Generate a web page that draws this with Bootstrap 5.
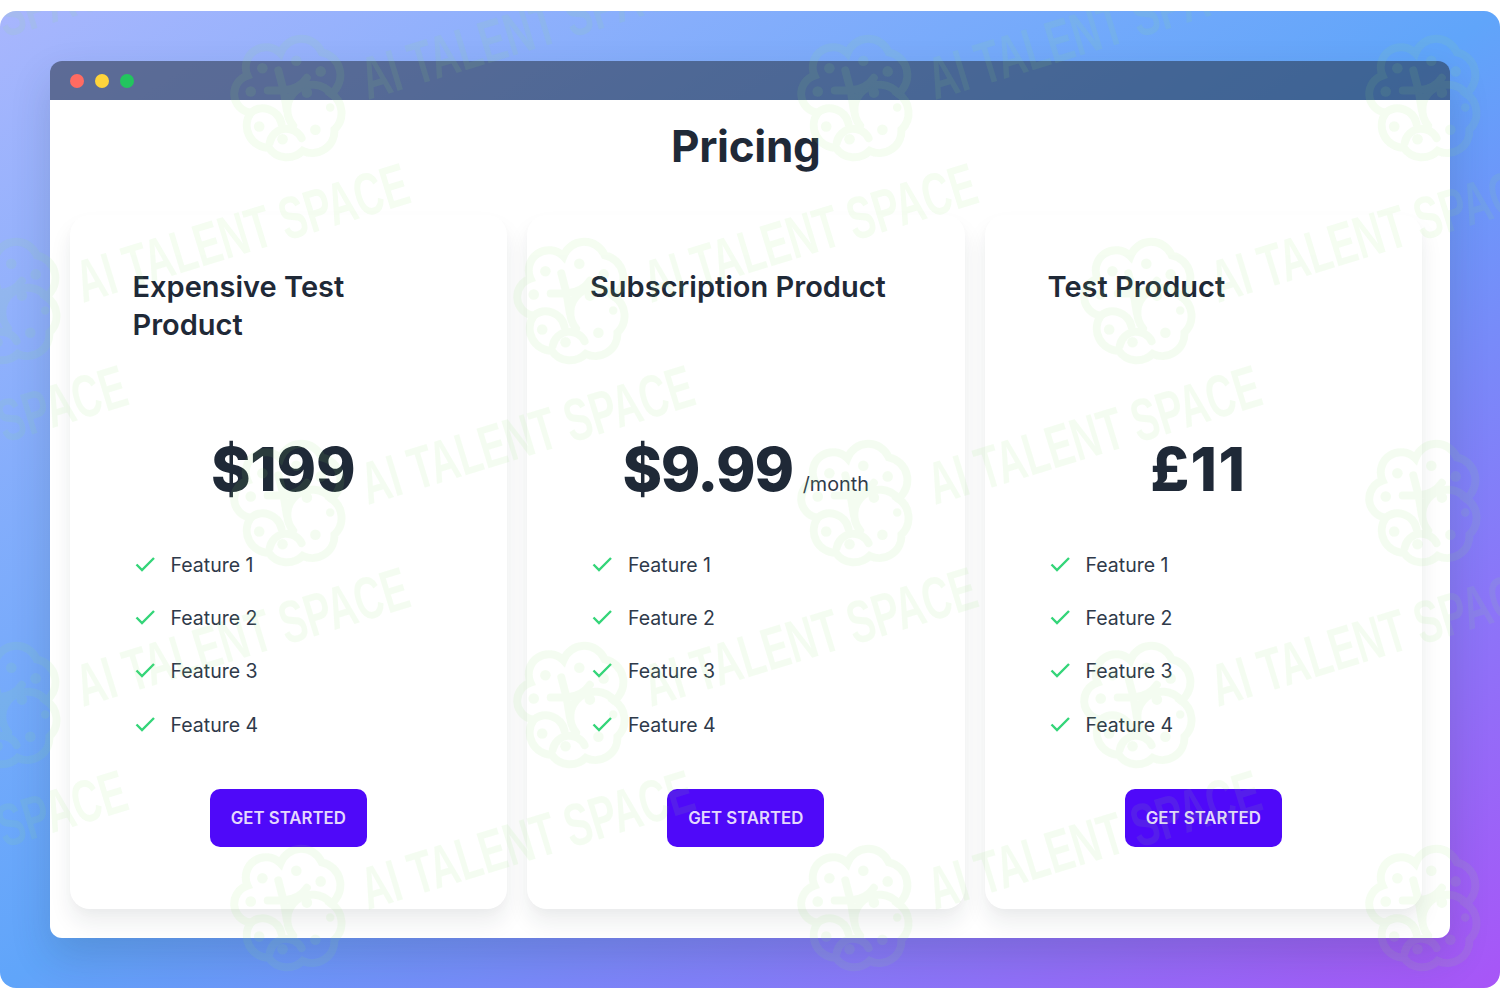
<!doctype html>
<html lang="en">
<head>
<meta charset="utf-8">
<title>Pricing</title>
<link href="https://cdn.jsdelivr.net/npm/bootstrap@5.3.0/dist/css/bootstrap.min.css" rel="stylesheet">
<style>
html, body { background: #fff; }
body { font-family: "Inter", "Liberation Sans", sans-serif; color: #1f2937; height: 1000px; overflow: hidden; padding: 11px 0 12px; }
.stage { height: 977px; padding: 50px; border-radius: 16px; background: linear-gradient(to bottom right, #a8b6fd 0%, #60a5fa 50%, #a855f7 100%); overflow: hidden; }
.app-window { height: 877px; border-radius: 12px; box-shadow: 0 18px 40px rgba(31,41,55,.16); overflow: hidden; }
.title-bar { height: 39px; padding-left: 20px; gap: 11px; background: rgba(31,41,55,.52); }
.dot-light { width: 14px; height: 14px; border-radius: 50%; }
.dot-red { background: #ff6b62; } .dot-yellow { background: #ffd43b; } .dot-green { background: #22c55e; }
.sheet { height: 838px; background: #fff; }
.page-heading { font-size: 44px; font-weight: 700; line-height: 53px; letter-spacing: -.3px; margin: 0; padding: 20px 28px 0 19.5px; height: 115px; color: #1f2937; }
.plans { padding: 0 28px 0 19.5px; gap: 20px; }
.plan { flex: 1 1 0; height: 694px; border: 0; border-radius: 20px; padding: 52.5px 40px 0 63px; box-shadow: 0 14px 22px rgba(31,41,55,.08), 0 4px 10px rgba(31,41,55,.02); }
.plan-name { font-size: 29px; font-weight: 600; line-height: 38px; height: 169.5px; max-width: 320px; margin: 0; color: #1f2937; }
.price-line { height: 64px; gap: 10px; margin: 0 -40px 0 -63px; }
.price-val { font-size: 60px; font-weight: 800; line-height: 64px; letter-spacing: -.2px; color: #1f2937; }
.price-tight { letter-spacing: -1.4px; }
.price-loose { letter-spacing: 1.3px; }
.price-per { font-size: 19.8px; line-height: 24px; margin-top: 35px; color: #2f3a4a; }
.feat-list { margin: 38px 0 0; }
.feat-item { height: 53.2px; gap: 16px; font-size: 19.5px; color: #2f3a4a; background: transparent; border: 0; padding: 0; }
.feat-item svg { width: 22px; height: 22px; flex: none; margin: -3px 0 0 1px; margin-right: -1px; }
.btn-row { margin: 37.4px -40px 0 -63px; }
.btn-cta { width: 157px; height: 58px; border-radius: 10px; background: #4f09f9; border: 0; color: #e4d8fd; font-size: 16.8px; font-weight: 600; line-height: 58px; padding: 0; }
.wm-layer { inset: 0; pointer-events: none; }
.wm-layer .wm-text { font-family: "Liberation Sans Narrow", "Liberation Sans", sans-serif; font-weight: 700; font-size: 60px; fill: #90e870; }
</style>
</head>
<body>
<div class="stage position-relative">
  <div class="app-window">
    <div class="title-bar d-flex align-items-center">
      <span class="dot-light dot-red"></span><span class="dot-light dot-yellow"></span><span class="dot-light dot-green"></span>
    </div>
    <div class="sheet">
      <h1 class="page-heading text-center">Pricing</h1>
      <div class="plans d-flex">
        <div class="card plan">
          <h2 class="plan-name">Expensive Test Product</h2>
          <div class="price-line d-flex justify-content-center"><span class="price-val">$199</span><span class="price-per"></span></div>
          <ul class="feat-list list-group">
            <li class="list-group-item feat-item d-flex align-items-center"><svg viewBox="0 0 22 22" fill="none" stroke="#34d579" stroke-width="2.4"><path d="M2.5 11.5l5.5 5.5L20 5"/></svg>Feature 1</li>
            <li class="list-group-item feat-item d-flex align-items-center"><svg viewBox="0 0 22 22" fill="none" stroke="#34d579" stroke-width="2.4"><path d="M2.5 11.5l5.5 5.5L20 5"/></svg>Feature 2</li>
            <li class="list-group-item feat-item d-flex align-items-center"><svg viewBox="0 0 22 22" fill="none" stroke="#34d579" stroke-width="2.4"><path d="M2.5 11.5l5.5 5.5L20 5"/></svg>Feature 3</li>
            <li class="list-group-item feat-item d-flex align-items-center"><svg viewBox="0 0 22 22" fill="none" stroke="#34d579" stroke-width="2.4"><path d="M2.5 11.5l5.5 5.5L20 5"/></svg>Feature 4</li>
          </ul>
          <div class="btn-row d-flex justify-content-center"><button type="button" class="btn btn-cta">GET STARTED</button></div>
        </div>
        <div class="card plan">
          <h2 class="plan-name">Subscription Product</h2>
          <div class="price-line d-flex justify-content-center"><span class="price-val price-tight">$9.99</span><span class="price-per">/month</span></div>
          <ul class="feat-list list-group">
            <li class="list-group-item feat-item d-flex align-items-center"><svg viewBox="0 0 22 22" fill="none" stroke="#34d579" stroke-width="2.4"><path d="M2.5 11.5l5.5 5.5L20 5"/></svg>Feature 1</li>
            <li class="list-group-item feat-item d-flex align-items-center"><svg viewBox="0 0 22 22" fill="none" stroke="#34d579" stroke-width="2.4"><path d="M2.5 11.5l5.5 5.5L20 5"/></svg>Feature 2</li>
            <li class="list-group-item feat-item d-flex align-items-center"><svg viewBox="0 0 22 22" fill="none" stroke="#34d579" stroke-width="2.4"><path d="M2.5 11.5l5.5 5.5L20 5"/></svg>Feature 3</li>
            <li class="list-group-item feat-item d-flex align-items-center"><svg viewBox="0 0 22 22" fill="none" stroke="#34d579" stroke-width="2.4"><path d="M2.5 11.5l5.5 5.5L20 5"/></svg>Feature 4</li>
          </ul>
          <div class="btn-row d-flex justify-content-center"><button type="button" class="btn btn-cta">GET STARTED</button></div>
        </div>
        <div class="card plan">
          <h2 class="plan-name">Test Product</h2>
          <div class="price-line d-flex justify-content-center"><span class="price-val price-loose">£11</span><span class="price-per"></span></div>
          <ul class="feat-list list-group">
            <li class="list-group-item feat-item d-flex align-items-center"><svg viewBox="0 0 22 22" fill="none" stroke="#34d579" stroke-width="2.4"><path d="M2.5 11.5l5.5 5.5L20 5"/></svg>Feature 1</li>
            <li class="list-group-item feat-item d-flex align-items-center"><svg viewBox="0 0 22 22" fill="none" stroke="#34d579" stroke-width="2.4"><path d="M2.5 11.5l5.5 5.5L20 5"/></svg>Feature 2</li>
            <li class="list-group-item feat-item d-flex align-items-center"><svg viewBox="0 0 22 22" fill="none" stroke="#34d579" stroke-width="2.4"><path d="M2.5 11.5l5.5 5.5L20 5"/></svg>Feature 3</li>
            <li class="list-group-item feat-item d-flex align-items-center"><svg viewBox="0 0 22 22" fill="none" stroke="#34d579" stroke-width="2.4"><path d="M2.5 11.5l5.5 5.5L20 5"/></svg>Feature 4</li>
          </ul>
          <div class="btn-row d-flex justify-content-center"><button type="button" class="btn btn-cta">GET STARTED</button></div>
        </div>
      </div>
    </div>
  </div>
  <svg class="wm-layer position-absolute" width="1500" height="977" viewBox="0 11 1500 977" opacity=".095" aria-hidden="true">
    <defs>
      <filter id="wm-soft" x="-10%" y="-10%" width="120%" height="120%"><feGaussianBlur stdDeviation=".7"/></filter>
      <g id="wm-unit">
        <g filter="url(#wm-soft)" transform="translate(1 0) scale(1.06)">
          <g fill="none" stroke="#90e870" stroke-width="7.5" stroke-linecap="round">
            <path d="M-41 -23A19 19 0 0 1 -10 -44A21 21 0 0 1 29 -45A22 22 0 0 1 38 -6A22 22 0 0 1 41 28A21 21 0 0 1 11 48A21 21 0 0 1 -21 45A21 21 0 0 1 -38 12A18 18 0 0 1 -41 -23Z"/>
            <path d="M-38 12A18 18 0 0 1 -9 22M-20 40A16 16 0 0 1 10 36M2 24A19 19 0 0 1 38 -6"/>
            <path d="M-22 -9H-7Q8 -10 15 -21M-12 -28L-7 -9L-4 9"/>
          </g>
          <g fill="#90e870">
            <circle cx="-27" cy="-30" r="5"/><circle cx="5" cy="-37" r="5"/><circle cx="28" cy="-27" r="5"/><circle cx="-38" cy="-8" r="5"/><circle cx="15" cy="-7" r="5"/><circle cx="37" cy="7" r="4"/>
            <circle cx="-30" cy="25" r="5"/><circle cx="-8" cy="37" r="5"/><circle cx="23" cy="28" r="5"/>
          </g>
        </g>
        <text class="wm-text" x="78" y="0" textLength="345" lengthAdjust="spacingAndGlyphs" transform="rotate(-17 78 0)">AI TALENT SPACE</text>
      </g>
    </defs>
    <use href="#wm-unit" x="-277" y="100"/><use href="#wm-unit" x="290" y="100"/><use href="#wm-unit" x="857" y="100"/><use href="#wm-unit" x="1425" y="100"/>
    <use href="#wm-unit" x="5" y="303"/><use href="#wm-unit" x="573" y="303"/><use href="#wm-unit" x="1140" y="303"/>
    <use href="#wm-unit" x="-277" y="505"/><use href="#wm-unit" x="290" y="505"/><use href="#wm-unit" x="857" y="505"/><use href="#wm-unit" x="1425" y="505"/>
    <use href="#wm-unit" x="5" y="707"/><use href="#wm-unit" x="573" y="707"/><use href="#wm-unit" x="1140" y="707"/>
    <use href="#wm-unit" x="-277" y="910"/><use href="#wm-unit" x="290" y="910"/><use href="#wm-unit" x="857" y="910"/><use href="#wm-unit" x="1425" y="910"/>
  </svg>
</div>
<script src="https://cdn.jsdelivr.net/npm/bootstrap@5.3.0/dist/js/bootstrap.bundle.min.js"></script>
</body>
</html>
